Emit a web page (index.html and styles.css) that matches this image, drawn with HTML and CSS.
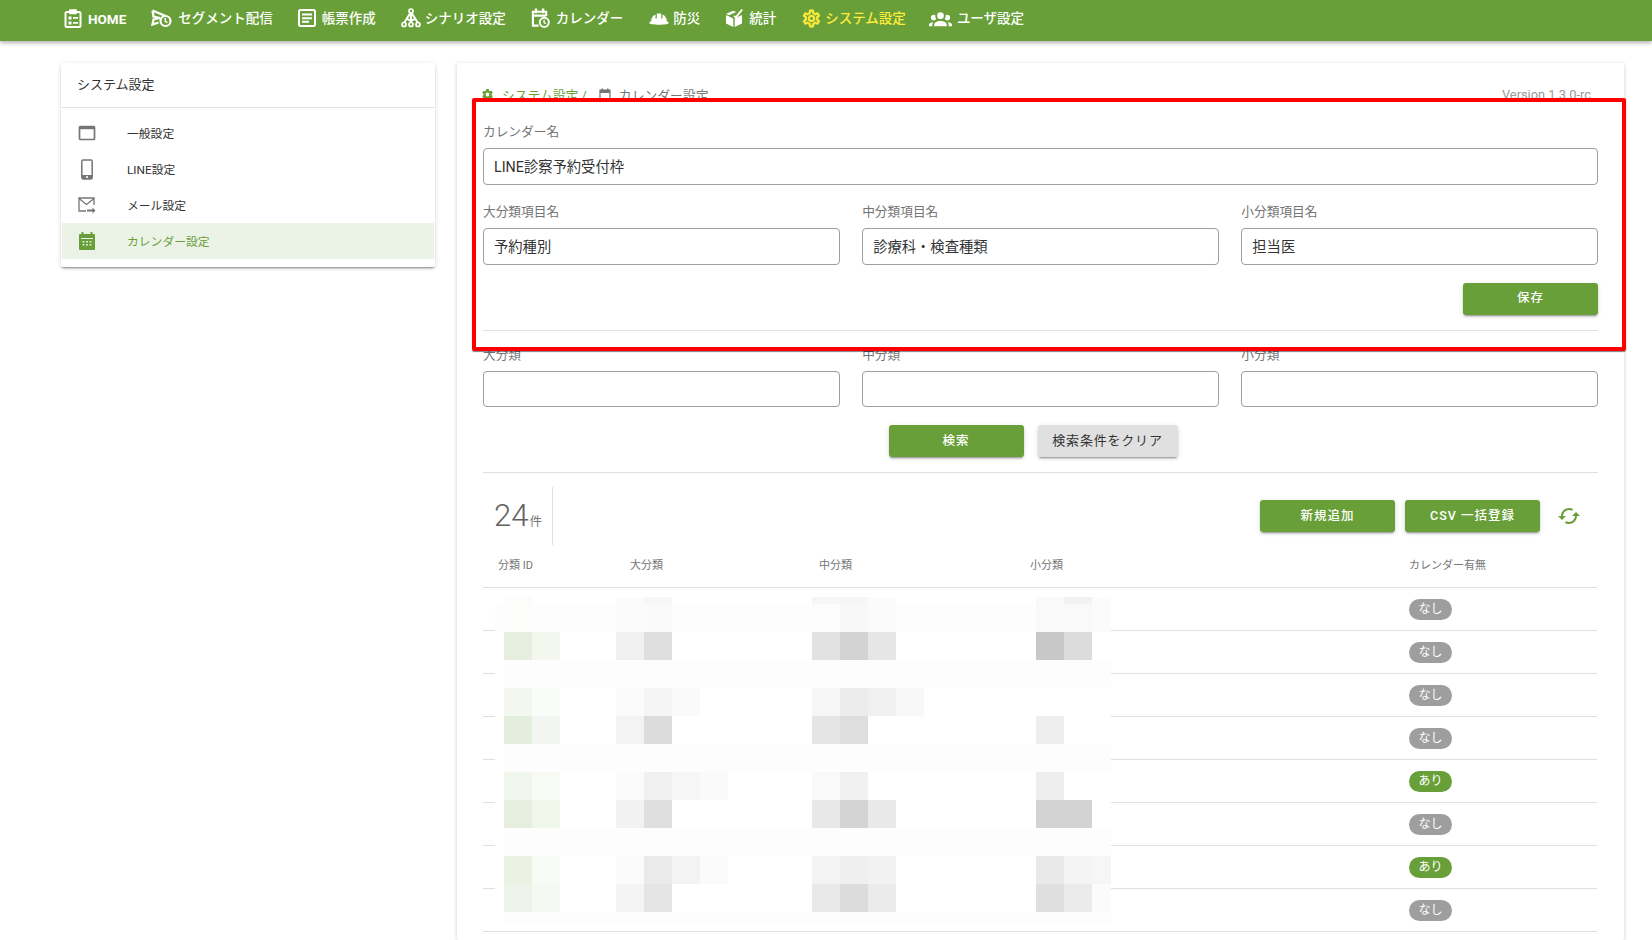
FILE: index.html
```html
<!DOCTYPE html>
<html lang="ja">
<head>
  <meta charset="UTF-8" />
  <title>カレンダー設定</title>
  <link rel="stylesheet" href="styles.css">
</head>
<body>
  <header class="topbar">
    <nav class="topnav">
      <a class="nav-item nav-home">
        <svg class="nav-icon" width="18" height="19" viewBox="0 0 18 19"><rect x="1.500" y="3" width="15" height="15" rx="1.500" fill="none" stroke="#fff" stroke-width="2"/><rect x="5" y="0.300" width="8" height="5" rx="1" fill="#fff"/><path d="M4.500 7.500h3v3h-3zM4.500 12.500h3v3h-3zM9 8h5v1.800H9zM9 13h5v1.800H9z" fill="#fff"/></svg>
        <span>HOME</span>
      </a>
      <a class="nav-item">
        <svg class="nav-icon" width="21" height="20" viewBox="0 0 21 20"><path d="M1.500 2.500l13 5.500M1.500 2.500l1 6 6.500 1.500-6.500 1.500-1 5 6-2" fill="none" stroke="#fff" stroke-width="2.300"/><circle cx="14.500" cy="13" r="5" fill="#689f38" stroke="#fff" stroke-width="2.200"/><path d="M14.300 10v3.400l2.200 1.200" fill="none" stroke="#fff" stroke-width="1.500"/></svg>
        <span>セグメント配信</span>
      </a>
      <a class="nav-item">
        <svg class="nav-icon" width="18" height="18" viewBox="0 0 18 18"><rect x="1" y="1" width="16" height="16" rx="1.500" fill="none" stroke="#fff" stroke-width="2"/><path d="M4 4.500h10v2H4zM4 8.200h10v2H4zM4 11.800h7v2H4z" fill="#fff"/></svg>
        <span>帳票作成</span>
      </a>
      <a class="nav-item nav-scenario">
        <svg class="nav-icon" width="20" height="20" viewBox="0 0 20 20"><path d="M10 4L3 15M10 4v11M10 4l7 11M5.500 10.500L10 13l4.500-2.500" fill="none" stroke="#fff" stroke-width="2"/><circle cx="10" cy="3" r="2" fill="#689f38" stroke="#fff" stroke-width="1.700"/><circle cx="3" cy="16.500" r="2" fill="#689f38" stroke="#fff" stroke-width="1.700"/><circle cx="10" cy="16.500" r="2" fill="#689f38" stroke="#fff" stroke-width="1.700"/><circle cx="17" cy="16.500" r="2" fill="#689f38" stroke="#fff" stroke-width="1.700"/></svg>
        <span>シナリオ設定</span>
      </a>
      <a class="nav-item">
        <svg class="nav-icon" width="19" height="22" viewBox="0 0 20 22"><path d="M8 19H2V4.500h14V9M2 8.500h14" fill="none" stroke="#fff" stroke-width="2.200"/><path d="M4 1h2.500v5H4zM11.500 1H14v5h-2.500z" fill="#fff"/><circle cx="14" cy="15.500" r="4.800" fill="#689f38" stroke="#fff" stroke-width="2"/><path d="M13.800 12.800v3l2 1.200" fill="none" stroke="#fff" stroke-width="1.400"/></svg>
        <span>カレンダー</span>
      </a>
      <a class="nav-item nav-tight">
        <svg class="nav-icon" width="22" height="21" viewBox="0 0 24 24"><path d="M1 17c0-1 .7-1.700 2-2 .2-3.500 2-6.300 5-7.500V12h1.500V6.300h5V12H16V7.500c3 1.200 4.800 4 5 7.500 1.300.3 2 1 2 2 0 1.200-4.500 2-11 2S1 18.200 1 17z" fill="#fff"/></svg>
        <span>防災</span>
      </a>
      <a class="nav-item">
        <svg class="nav-icon" width="18" height="20" viewBox="0 0 18 20"><path d="M1 7l7.300 3.400V19L1 15.600zM17 7l-7.300 3.400V19l7.300-3.400zM1.200 5.700l7-3 3 1.300-7.200 3.200z" fill="#fff"/><path d="M9 8l2 1.200L17.200 1.500" fill="none" stroke="#fff" stroke-width="1.900"/></svg>
        <span>統計</span>
      </a>
      <a class="nav-item nav-active">
        <svg class="nav-icon" width="21" height="21" viewBox="0 0 24 24"><path fill="#ffeb3b" stroke="#ffeb3b" stroke-width="0.600" d="M12,8A4,4 0 0,1 16,12A4,4 0 0,1 12,16A4,4 0 0,1 8,12A4,4 0 0,1 12,8M12,10A2,2 0 0,0 10,12A2,2 0 0,0 12,14A2,2 0 0,0 14,12A2,2 0 0,0 12,10M10,22C9.75,22 9.54,21.82 9.5,21.58L9.13,18.93C8.5,18.68 7.96,18.34 7.44,17.94L4.95,18.95C4.73,19.03 4.46,18.95 4.34,18.73L2.34,15.27C2.21,15.05 2.27,14.78 2.46,14.63L4.57,12.97L4.5,12L4.57,11L2.46,9.37C2.27,9.22 2.21,8.95 2.34,8.73L4.34,5.27C4.46,5.05 4.73,4.96 4.95,5.05L7.44,6.05C7.96,5.66 8.5,5.32 9.13,5.07L9.5,2.42C9.54,2.18 9.75,2 10,2H14C14.25,2 14.46,2.18 14.5,2.42L14.87,5.07C15.5,5.32 16.04,5.66 16.56,6.05L19.05,5.05C19.27,4.96 19.54,5.05 19.66,5.27L21.66,8.73C21.79,8.95 21.73,9.22 21.54,9.37L19.43,11L19.5,12L19.43,13L21.54,14.63C21.73,14.78 21.79,15.05 21.66,15.27L19.66,18.73C19.54,18.95 19.27,19.04 19.05,18.95L16.56,17.95C16.04,18.34 15.5,18.68 14.87,18.93L14.5,21.58C14.46,21.82 14.25,22 14,22H10M11.25,4L10.88,6.61C9.68,6.86 8.62,7.5 7.85,8.39L5.44,7.35L4.69,8.65L6.8,10.2C6.4,11.37 6.4,12.64 6.8,13.8L4.68,15.36L5.43,16.66L7.86,15.62C8.63,16.5 9.68,17.14 10.87,17.38L11.24,20H12.76L13.13,17.39C14.32,17.14 15.37,16.5 16.14,15.62L18.57,16.66L19.32,15.36L17.2,13.81C17.6,12.64 17.6,11.37 17.2,10.2L19.31,8.65L18.56,7.35L16.15,8.39C15.38,7.5 14.32,6.86 13.12,6.62L12.75,4H11.25Z"/></svg>
        <span>システム設定</span>
      </a>
      <a class="nav-item nav-last">
        <svg class="nav-icon" width="23" height="23" viewBox="0 0 24 24"><path fill="#fff" d="M12,5.500A3.500,3.500 0 0,1 15.500,9A3.500,3.500 0 0,1 12,12.500A3.500,3.500 0 0,1 8.500,9A3.500,3.500 0 0,1 12,5.500M5,8C5.560,8 6.080,8.150 6.530,8.420C6.380,9.850 6.800,11.270 7.660,12.380C7.160,13.340 6.160,14 5,14A3,3 0 0,1 2,11A3,3 0 0,1 5,8M19,8A3,3 0 0,1 22,11A3,3 0 0,1 19,14C17.840,14 16.840,13.340 16.340,12.380C17.200,11.270 17.620,9.850 17.470,8.420C17.920,8.150 18.440,8 19,8M5.500,18.250C5.500,16.180 8.410,14.500 12,14.500C15.590,14.500 18.500,16.180 18.500,18.250V20H5.500V18.250M0,20V18.500C0,17.110 1.890,15.940 4.450,15.600C3.860,16.280 3.500,17.220 3.500,18.250V20H0M24,20H20.500V18.250C20.500,17.220 20.140,16.280 19.550,15.600C22.110,15.940 24,17.110 24,18.500V20Z"/></svg>
        <span>ユーザ設定</span>
      </a>
    </nav>
  </header>

  <div class="page">
    <aside class="side-card">
      <div class="side-title">システム設定</div>
      <ul class="side-list">
        <li class="side-item">
          <svg class="side-icon" width="18" height="16" viewBox="0 0 18 16"><rect x="1.500" y="1.500" width="15" height="13" rx="1" fill="none" stroke="#757575" stroke-width="1.700"/><rect x="1.500" y="1" width="15" height="3.200" fill="#757575"/></svg>
          <span>一般設定</span>
        </li>
        <li class="side-item">
          <svg class="side-icon" width="18" height="21" viewBox="0 0 18 21"><rect x="3.800" y="1" width="10.400" height="19" rx="1.500" fill="none" stroke="#757575" stroke-width="1.500"/><path d="M4 16h10v4H4z" fill="#757575"/><circle cx="9" cy="18" r="1.100" fill="#fff"/></svg>
          <span>LINE設定</span>
        </li>
        <li class="side-item">
          <svg class="side-icon" width="18" height="17" viewBox="0 0 18 17"><path d="M8 14H1V1h15v7" fill="none" stroke="#757575" stroke-width="1.300"/><path d="M1 1.500l7.500 6 7.500-6" fill="none" stroke="#757575" stroke-width="1.300"/><path d="M9 12.500h5.500v-2l3 3-3 3v-2H9z" fill="#757575"/></svg>
          <span>メール設定</span>
        </li>
        <li class="side-item side-item-active">
          <svg class="side-icon" width="18" height="20" viewBox="0 0 18 20"><path d="M2 3h14a1 1 0 0 1 1 1v14a1 1 0 0 1-1 1H2a1 1 0 0 1-1-1V4a1 1 0 0 1 1-1z" fill="#689f38"/><path d="M3.500 1h2v3h-2zM12.500 1h2v3h-2z" fill="#689f38"/><path d="M3 7h12v1H3z" fill="#ebf3e6"/><path d="M4.500 10h2v1.500h-2zM8 10h2v1.500H8zM11.500 10h2v1.500h-2zM4.500 13h2v1.500h-2zM8 13h2v1.500H8zM11.500 13h2v1.500h-2z" fill="#dcead2"/></svg>
          <span>カレンダー設定</span>
        </li>
      </ul>
    </aside>

    <main class="main-card">
      <div class="crumb-row">
        <div class="crumbs">
          <svg class="crumb-icon" width="13" height="13" viewBox="0 0 24 24"><path fill="#689f38" d="M12,15.500A3.500,3.500 0 0,1 8.500,12A3.500,3.500 0 0,1 12,8.500A3.500,3.500 0 0,1 15.500,12A3.500,3.500 0 0,1 12,15.500M19.430,12.970C19.470,12.650 19.500,12.330 19.500,12C19.500,11.670 19.470,11.340 19.430,11L21.540,9.370C21.730,9.220 21.780,8.950 21.660,8.730L19.660,5.270C19.540,5.050 19.270,4.960 19.050,5.050L16.560,6.050C16.040,5.660 15.500,5.320 14.870,5.070L14.500,2.420C14.460,2.180 14.250,2 14,2H10C9.750,2 9.540,2.180 9.500,2.420L9.130,5.070C8.500,5.320 7.960,5.660 7.440,6.050L4.950,5.050C4.730,4.960 4.460,5.050 4.340,5.270L2.340,8.730C2.210,8.950 2.270,9.220 2.460,9.370L4.570,11C4.530,11.340 4.500,11.670 4.500,12C4.500,12.330 4.530,12.650 4.570,12.970L2.460,14.630C2.270,14.780 2.210,15.050 2.340,15.270L4.340,18.730C4.460,18.950 4.730,19.030 4.950,18.950L7.440,17.940C7.960,18.340 8.500,18.680 9.130,18.930L9.500,21.580C9.540,21.820 9.750,22 10,22H14C14.250,22 14.460,21.820 14.500,21.580L14.870,18.930C15.500,18.670 16.040,18.340 16.560,17.940L19.050,18.950C19.270,19.030 19.540,18.950 19.660,18.730L21.660,15.270C21.780,15.050 21.730,14.780 21.540,14.630L19.430,12.970Z"/></svg>
          <span class="crumb-link">システム設定 /</span>
          <svg class="crumb-icon crumb-icon-cal" width="12" height="13" viewBox="0 0 12 13"><path d="M1 2h10v10H1z" fill="none" stroke="#757575" stroke-width="1.200"/><path d="M1 2h10v3H1zM2.500 0.500h1.500v2H2.500zM8 0.500h1.500v2H8z" fill="#757575"/></svg>
          <span>カレンダー設定</span>
        </div>
        <span class="version">Version 1.3.0-rc</span>
      </div>

      <div class="field">
        <label>カレンダー名</label>
        <input type="text" value="LINE診察予約受付枠">
      </div>
      <div class="field-row">
        <div class="field">
          <label>大分類項目名</label>
          <input type="text" value="予約種別">
        </div>
        <div class="field">
          <label>中分類項目名</label>
          <input type="text" value="診療科・検査種類">
        </div>
        <div class="field">
          <label>小分類項目名</label>
          <input type="text" value="担当医">
        </div>
      </div>
      <div class="save-row">
        <button class="btn btn-green">保存</button>
      </div>
      <hr class="rule">

      <div class="field-row search-row">
        <div class="field">
          <label>大分類</label>
          <input type="text">
        </div>
        <div class="field">
          <label>中分類</label>
          <input type="text">
        </div>
        <div class="field">
          <label>小分類</label>
          <input type="text">
        </div>
      </div>
      <div class="search-actions">
        <button class="btn btn-green">検索</button>
        <button class="btn btn-grey">検索条件をクリア</button>
      </div>
      <hr class="rule">

      <div class="toolbar">
        <div class="count"><span class="count-num">24</span><span class="count-unit">件</span></div>
        <div class="toolbar-actions">
          <button class="btn btn-green">新規追加</button>
          <button class="btn btn-green">CSV 一括登録</button>
          <svg class="reload" width="24" height="24" viewBox="0 0 24 24"><path fill="#689f38" d="M19,8L15,12H18A6,6 0 0,1 12,18C11,18 10.030,17.750 9.200,17.300L7.740,18.760C8.970,19.540 10.430,20 12,20A8,8 0 0,0 20,12H23M6,12A6,6 0 0,1 12,6C13,6 13.970,6.250 14.800,6.700L16.260,5.240C15.030,4.460 13.570,4 12,4A8,8 0 0,0 4,12H1L5,16L9,12"/></svg>
        </div>
      </div>

      <table class="list-table">
        <colgroup>
          <col class="col-id"><col class="col-l"><col class="col-m"><col class="col-s"><col>
        </colgroup>
        <thead>
          <tr><th>分類 ID</th><th>大分類</th><th>中分類</th><th>小分類</th><th>カレンダー有無</th></tr>
        </thead>
        <tbody>
          <tr><td></td><td></td><td></td><td></td><td><span class="badge">なし</span></td></tr>
          <tr><td></td><td></td><td></td><td></td><td><span class="badge">なし</span></td></tr>
          <tr><td></td><td></td><td></td><td></td><td><span class="badge">なし</span></td></tr>
          <tr><td></td><td></td><td></td><td></td><td><span class="badge">なし</span></td></tr>
          <tr><td></td><td></td><td></td><td></td><td><span class="badge badge-on">あり</span></td></tr>
          <tr><td></td><td></td><td></td><td></td><td><span class="badge">なし</span></td></tr>
          <tr><td></td><td></td><td></td><td></td><td><span class="badge badge-on">あり</span></td></tr>
          <tr><td></td><td></td><td></td><td></td><td><span class="badge">なし</span></td></tr>
        </tbody>
      </table>

      <!-- mosaic over the table cells -->
      <svg class="mosaic" width="616" height="327" viewBox="495 597 616 327">
        <rect x="495" y="597" width="616" height="327" fill="#fff"/>
        <rect x="495" y="604" width="616" height="28" fill="#fdfdfd"/>
        <rect x="504" y="660" width="607" height="28" fill="#fdfdfd"/>
        <rect x="504" y="744" width="607" height="28" fill="#fdfdfd"/>
        <rect x="504" y="828" width="607" height="28" fill="#fdfdfd"/>
        <rect x="504" y="912" width="607" height="12" fill="#fdfdfd"/>

        <rect x="504" y="597" height="35" width="28" fill="#fcfcfa"/>
        <rect x="616" y="597" height="35" width="28" fill="#fbfbfb"/>
        <rect x="644" y="604" height="28" width="28" fill="#fafafa"/>
        <rect x="644" y="597" height="7" width="28" fill="#f7f7f7"/>
        <rect x="812" y="597" height="7" width="28" fill="#f6f6f6"/>
        <rect x="812" y="604" height="28" width="28" fill="#fcfcfc"/>
        <rect x="840" y="597" height="7" width="28" fill="#f6f6f6"/>
        <rect x="840" y="604" height="28" width="28" fill="#f8f8f8"/>
        <rect x="868" y="597" height="35" width="28" fill="#fbfbfb"/>
        <rect x="1036" y="597" height="35" width="28" fill="#f9f9f9"/>
        <rect x="1064" y="597" height="7" width="28" fill="#f2f2f2"/>
        <rect x="1064" y="604" height="28" width="28" fill="#f9f9f9"/>
        <rect x="1092" y="597" height="35" width="19" fill="#fbfbfb"/>

        <rect x="504" y="632" height="28" width="28" fill="#e6efdf"/>
        <rect x="532" y="632" height="28" width="28" fill="#f3f7ee"/>
        <rect x="616" y="632" height="28" width="28" fill="#f1f1f1"/>
        <rect x="644" y="632" height="28" width="28" fill="#dfdfdf"/>
        <rect x="812" y="632" height="28" width="28" fill="#e2e2e2"/>
        <rect x="840" y="632" height="28" width="28" fill="#d3d3d3"/>
        <rect x="868" y="632" height="28" width="28" fill="#e6e6e6"/>
        <rect x="1036" y="632" height="28" width="28" fill="#c8c8c8"/>
        <rect x="1064" y="632" height="28" width="28" fill="#dcdcdc"/>

        <rect x="504" y="688" height="28" width="28" fill="#f3f7f0"/>
        <rect x="532" y="688" height="28" width="28" fill="#f9fcf8"/>
        <rect x="616" y="688" height="28" width="28" fill="#fbfbfb"/>
        <rect x="644" y="688" height="28" width="28" fill="#f5f5f5"/>
        <rect x="672" y="688" height="28" width="28" fill="#fafafa"/>
        <rect x="812" y="688" height="28" width="28" fill="#f6f6f6"/>
        <rect x="840" y="688" height="28" width="28" fill="#ececec"/>
        <rect x="868" y="688" height="28" width="28" fill="#f0f0f0"/>
        <rect x="896" y="688" height="28" width="28" fill="#f8f8f8"/>

        <rect x="504" y="716" height="28" width="28" fill="#e4eedc"/>
        <rect x="532" y="716" height="28" width="28" fill="#f3f6f0"/>
        <rect x="616" y="716" height="28" width="28" fill="#f3f3f3"/>
        <rect x="644" y="716" height="28" width="28" fill="#dcdcdc"/>
        <rect x="812" y="716" height="28" width="28" fill="#e5e5e5"/>
        <rect x="840" y="716" height="28" width="28" fill="#dedede"/>
        <rect x="1036" y="716" height="28" width="28" fill="#eeeeee"/>

        <rect x="504" y="772" height="28" width="28" fill="#f1f6ec"/>
        <rect x="532" y="772" height="28" width="28" fill="#f8fbf5"/>
        <rect x="616" y="772" height="28" width="28" fill="#fbfbfb"/>
        <rect x="644" y="772" height="28" width="28" fill="#f0f0f0"/>
        <rect x="672" y="772" height="28" width="28" fill="#f6f6f6"/>
        <rect x="700" y="772" height="28" width="28" fill="#fafafa"/>
        <rect x="812" y="772" height="28" width="28" fill="#f9f9f9"/>
        <rect x="840" y="772" height="28" width="28" fill="#f1f1f1"/>
        <rect x="1036" y="772" height="28" width="28" fill="#eeeeee"/>

        <rect x="504" y="800" height="28" width="28" fill="#e6eee0"/>
        <rect x="532" y="800" height="28" width="28" fill="#f0f6ea"/>
        <rect x="616" y="800" height="28" width="28" fill="#f2f2f2"/>
        <rect x="644" y="800" height="28" width="28" fill="#dfdfdf"/>
        <rect x="812" y="800" height="28" width="28" fill="#e8e8e8"/>
        <rect x="840" y="800" height="28" width="28" fill="#d4d4d4"/>
        <rect x="868" y="800" height="28" width="28" fill="#e9e9e9"/>
        <rect x="1036" y="800" height="28" width="56" fill="#d3d3d3"/>

        <rect x="504" y="856" height="28" width="28" fill="#ebf2e4"/>
        <rect x="532" y="856" height="28" width="28" fill="#f8fbf5"/>
        <rect x="616" y="856" height="28" width="28" fill="#fbfbfb"/>
        <rect x="644" y="856" height="28" width="28" fill="#eaeaea"/>
        <rect x="672" y="856" height="28" width="28" fill="#f3f3f3"/>
        <rect x="700" y="856" height="28" width="28" fill="#fbfbfb"/>
        <rect x="812" y="856" height="28" width="28" fill="#f3f3f3"/>
        <rect x="840" y="856" height="28" width="28" fill="#efefef"/>
        <rect x="868" y="856" height="28" width="28" fill="#f2f2f2"/>
        <rect x="1036" y="856" height="28" width="28" fill="#e9e9e9"/>
        <rect x="1064" y="856" height="28" width="28" fill="#f4f4f4"/>
        <rect x="1092" y="856" height="28" width="19" fill="#f6f6f6"/>

        <rect x="504" y="884" height="28" width="28" fill="#eef3ea"/>
        <rect x="532" y="884" height="28" width="28" fill="#f6f9f3"/>
        <rect x="616" y="884" height="28" width="28" fill="#f4f4f4"/>
        <rect x="644" y="884" height="28" width="28" fill="#e5e5e5"/>
        <rect x="812" y="884" height="28" width="28" fill="#e9e9e9"/>
        <rect x="840" y="884" height="28" width="28" fill="#dcdcdc"/>
        <rect x="868" y="884" height="28" width="28" fill="#ebebeb"/>
        <rect x="1036" y="884" height="28" width="28" fill="#dfdfdf"/>
        <rect x="1064" y="884" height="28" width="28" fill="#ebebeb"/>
        <rect x="1092" y="884" height="28" width="19" fill="#fbfbfb"/>
      </svg>

      <!-- red highlight drawn on the screenshot -->
      <div class="highlight"></div>
    </main>
  </div>
</body>
</html>
```

FILE: styles.css
```css
html, body {
  margin: 0;
  height: 940px;
  overflow: hidden;
}

body {
  font-family: Roboto, "Noto Sans CJK JP", sans-serif;
  background-color: #fff;
  color: #333;
}

.topbar {
  height: 41px;
  background-color: #689f38;
  box-shadow: 0 2px 4px rgba(0,0,0,0.3);
  position: relative;
  z-index: 2;
}

.topnav {
  display: flex;
  align-items: center;
  gap: 25px;
  height: 36px;
  padding-left: 64px;
}

.nav-item {
  display: flex;
  align-items: center;
  gap: 6px;
  color: #fff;
  font-size: 13.5px;
  font-weight: 500;
  white-space: nowrap;
}

.nav-item span {
  padding-bottom: 2px;
}

.nav-home {
  font-weight: 700;
}

.nav-home span {
  padding: 1px 0 0;
}

.nav-scenario {
  gap: 4px;
}

.nav-tight {
  gap: 3px;
}

.nav-active {
  color: #ffeb3b;
  gap: 3px;
}

.nav-last {
  margin-left: -2px;
  gap: 5px;
}

.nav-icon {
  flex: none;
}

.page {
  display: flex;
  align-items: flex-start;
  gap: 22px;
  padding: 22px 0 0 61px;
}

.side-card {
  width: 374px;
  height: 204px;
  padding: 0 1px;
  box-sizing: border-box;
  background: #fff;
  box-shadow: 0 3px 1px -2px rgba(0,0,0,0.2), 0 2px 2px 0 rgba(0,0,0,0.14), 0 1px 5px 0 rgba(0,0,0,0.12);
  border-radius: 2px;
}

.side-title {
  height: 44px;
  line-height: 43px;
  padding-left: 15px;
  font-size: 13px;
  border-bottom: 1px solid #e0e0e0;
}

.side-list {
  list-style: none;
  margin: 0;
  padding: 7px 0 8px;
}

.side-item {
  display: flex;
  align-items: center;
  height: 36px;
  padding-left: 16px;
  font-size: 11.8px;
}

.side-item span {
  padding-bottom: 2px;
}

.side-icon {
  flex: none;
  width: 18px;
  margin-right: 31px;
}

.side-item-active {
  background-color: #ebf3e6;
  color: #689f38;
}

.main-card {
  position: relative;
  width: 1167px;
  height: 877px;
  padding: 21px 26px 0;
  box-sizing: border-box;
  background: #fff;
  box-shadow: 0 1px 4px rgba(0,0,0,0.2);
  border-radius: 2px;
}

.crumb-row {
  display: flex;
  justify-content: space-between;
  align-items: center;
  height: 20px;
  padding-right: 7px;
  margin-bottom: 19px;
  font-size: 12.8px;
  color: #757575;
}

.crumbs {
  display: flex;
  align-items: center;
}

.crumb-icon {
  margin-left: -2px;
  margin-right: 8px;
}

.crumb-icon-cal {
  margin-left: 12px;
}

.crumb-link {
  color: #689f38;
}

.version {
  color: #999;
}

.field label {
  display: block;
  height: 18px;
  line-height: 18px;
  margin-bottom: 7px;
  font-size: 12.7px;
  color: #757575;
}

.field input {
  display: block;
  width: 100%;
  height: 36.5px;
  box-sizing: border-box;
  padding: 0 10px 2px;
  border: 1px solid #9e9e9e;
  border-radius: 4px;
  background: #fff;
  font-family: inherit;
  font-size: 14.3px;
  color: #333;
  outline: none;
}

.field-row {
  display: grid;
  grid-template-columns: repeat(3, 1fr);
  gap: 22.5px;
  margin-top: 18.5px;
}

.search-row {
  margin-top: 15px;
}

.save-row {
  display: flex;
  justify-content: flex-end;
  margin-top: 18px;
}

.btn {
  width: 135px;
  height: 32px;
  padding: 0 0 4px;
  border: none;
  border-radius: 3px;
  font-family: inherit;
  font-size: 12.5px;
  font-weight: 500;
  letter-spacing: 1px;
  box-shadow: 0 3px 1px -2px rgba(0,0,0,0.2), 0 2px 2px 0 rgba(0,0,0,0.14), 0 1px 5px 0 rgba(0,0,0,0.12);
}

.btn-green {
  background-color: #689f38;
  color: #fff;
}

.btn-grey {
  width: 140px;
  background-color: #e0e0e0;
  color: #333;
  font-size: 13px;
  font-weight: 400;
  letter-spacing: 0.8px;
}

.rule {
  height: 1px;
  margin: 15px 0 0;
  border: none;
  background-color: #e0e0e0;
}

.search-actions {
  display: flex;
  justify-content: center;
  gap: 14px;
  margin-top: 18px;
  padding-right: 15px;
}

.toolbar {
  display: flex;
  align-items: center;
  justify-content: space-between;
  height: 58px;
  margin-top: 14px;
}

.count {
  display: flex;
  align-items: baseline;
  width: 70px;
  height: 58px;
  line-height: 58px;
  padding-left: 11px;
  box-sizing: border-box;
  border-right: 1px solid #e0e0e0;
  color: #616161;
}

.count-num {
  font-size: 31px;
  font-weight: 300;
}

.count-unit {
  margin-left: 1px;
  font-size: 12.5px;
  color: #757575;
}

.toolbar-actions {
  display: flex;
  align-items: center;
  gap: 10px;
  padding-right: 17px;
}

.reload {
  margin-left: 7px;
}

.list-table {
  width: 1114px;
  border-collapse: collapse;
  table-layout: fixed;
}

.col-id { width: 132px; }
.col-l { width: 189px; }
.col-m { width: 211px; }
.col-s { width: 394px; }

.list-table th {
  height: 37px;
  padding: 0 0 5px 15px;
  text-align: left;
  font-size: 11px;
  font-weight: 400;
  color: #757575;
  border-bottom: 1px solid #e0e0e0;
}

.list-table td {
  height: 42px;
  padding: 0 0 0 15px;
  border-bottom: 1px solid #e0e0e0;
}

.list-table th:last-child,
.list-table td:last-child {
  padding-left: 0;
}

.badge {
  display: block;
  width: 43px;
  height: 21px;
  line-height: 20px;
  border-radius: 11px;
  text-align: center;
  background-color: #9e9e9e;
  color: #fff;
  font-size: 12px;
}

.badge-on {
  background-color: #689f38;
}

.mosaic {
  position: absolute;
  left: 38px;
  top: 534px;
}

.highlight {
  position: absolute;
  left: 15px;
  top: 35px;
  width: 1154px;
  height: 253px;
  box-sizing: border-box;
  border: 4px solid #f00;
  border-radius: 2px;
  box-shadow: 0 1px 1px rgba(0,0,0,0.5);
}
```
